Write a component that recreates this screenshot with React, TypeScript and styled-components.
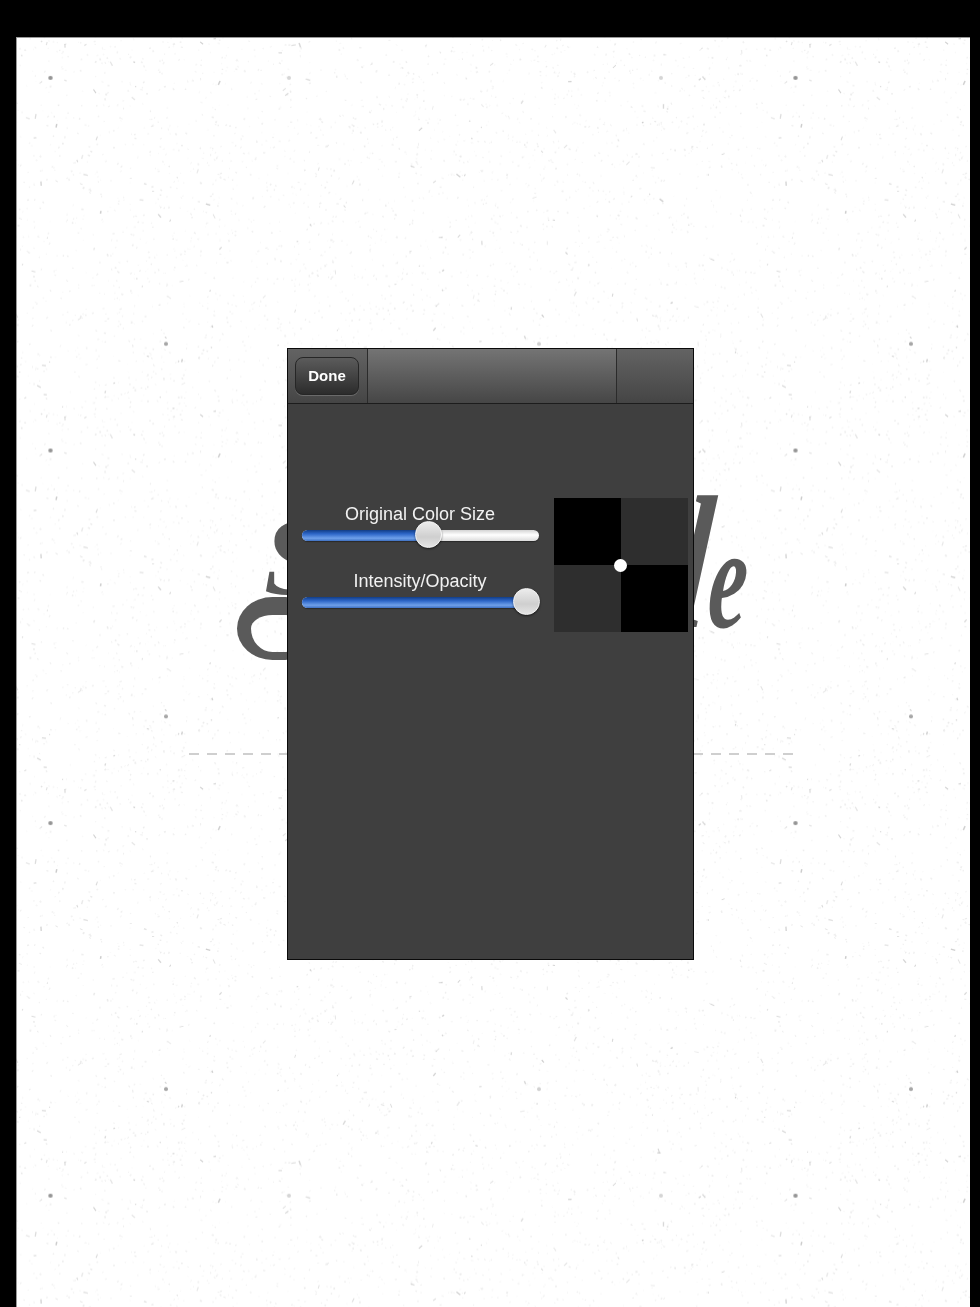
import React, { useMemo } from "react";
import styled, { createGlobalStyle } from "styled-components";

const Global = createGlobalStyle`
  html, body { margin: 0; padding: 0; background: #000; }
  body { height: 1307px; overflow: hidden; font-family: "Liberation Sans", Arial, sans-serif; }
`;

const Page = styled.div`
  height: 1307px;
  padding: 37px 10px 0 16px;
  box-sizing: border-box;
  background: #000;
`;

const Paper = styled.main`
  position: relative;
  height: 1270px;
  background: #fff;
  overflow: hidden;
  padding: 311px 0 0 271px;
  box-sizing: border-box;
  box-shadow: inset 1px 1px 0 #9a9a9a;
  filter: blur(0.35px);
`;

const Grain = styled.svg`
  position: absolute;
  inset: 0;
  width: 100%;
  height: 100%;
  filter: blur(0.6px);
`;

const LogoLetters = styled.span<{ $left: number; $top: number; $size: number; $sx: number; $skew: number }>`
  position: absolute;
  left: ${(p) => p.$left}px;
  top: ${(p) => p.$top}px;
  font-family: "Liberation Serif", serif;
  font-style: italic;
  font-weight: 700;
  font-size: ${(p) => p.$size}px;
  line-height: 0.7;
  color: #5a5a5a;
  transform-origin: 0 100%;
  transform: scaleX(${(p) => p.$sx}) skewX(${(p) => p.$skew}deg);
  white-space: nowrap;
`;

const LogoFlourish = styled.div`
  position: absolute;
  left: 221px;
  top: 560px;
  width: 72px;
  height: 63px;
  box-sizing: border-box;
  border-style: solid;
  border-color: #5a5a5a transparent #5a5a5a #5a5a5a;
  border-width: 18px 0 8px 14px;
  border-radius: 36px 24px 24px 36px / 32px;
`;

const Rule = styled.div`
  position: absolute;
  left: 173px;
  top: 716px;
  width: 606px;
  height: 2px;
  background: repeating-linear-gradient(90deg, #cfcfcf 0 10px, transparent 10px 18px);
`;

const Modal = styled.section`
  position: relative;
  width: 407px;
  height: 612px;
  box-sizing: border-box;
  border: 1px solid #0a0a0a;
  background: #3f3f3f;
  display: flex;
  flex-direction: column;
`;

const Toolbar = styled.header`
  height: 55px;
  flex: none;
  display: grid;
  grid-template-columns: 80px 1fr 77px;
  border-bottom: 1px solid #1c1c1c;
  box-sizing: border-box;
  background: linear-gradient(#747474, #464646);
`;

const ToolCell = styled.div<{ $divider?: "left" | "right"; $dim?: boolean }>`
  display: flex;
  align-items: center;
  padding-left: 7px;
  ${(p) => (p.$divider === "right" ? "border-right: 1px solid #2b2b2b;" : "")}
  ${(p) => (p.$divider === "left" ? "border-left: 1px solid #2b2b2b;" : "")}
  ${(p) => (p.$dim ? "background: linear-gradient(#636363, #454545);" : "")}
`;

const DoneButton = styled.button`
  width: 64px;
  height: 38px;
  margin-top: -1px;
  padding: 0;
  border: 1px solid #262626;
  border-radius: 8px;
  background: linear-gradient(#5b5b5b, #2c2c2c);
  box-shadow: 0 1px 0 #6a6a6a;
  color: #fff;
  font: 700 15px "Liberation Sans", Arial, sans-serif;
`;

const Body = styled.div`
  display: flex;
  align-items: flex-start;
  padding: 94px 5px 0 14px;
  gap: 14px;
`;

const Controls = styled.div`
  width: 238px;
  padding-top: 5px;
  display: flex;
  flex-direction: column;
  gap: 29px;
`;

const SliderGroup = styled.div`
  display: flex;
  flex-direction: column;
  align-items: center;
`;

const SliderLabel = styled.label`
  color: #f2f2f2;
  font-size: 18px;
  line-height: 22px;
  height: 22px;
  margin-left: -2px;
`;

const Track = styled.div`
  position: relative;
  width: 237px;
  height: 11px;
  margin: 5px 0 0 -1px;
  border-radius: 6px;
  background: linear-gradient(#d4d4d4, #ffffff 45%, #dcdcdc);
  box-shadow: 0 1px 1px rgba(0, 0, 0, 0.35);
`;

const Fill = styled.div`
  height: 100%;
  border-radius: 6px 0 0 6px;
  background: linear-gradient(#123d86, #2d66c8 35%, #6fa0ea 75%, #3e70c2);
`;

const Thumb = styled.div`
  position: absolute;
  top: -9px;
  width: 27px;
  height: 27px;
  margin-left: -13px;
  border-radius: 50%;
  background: linear-gradient(#ececec, #cfcfcf 60%, #e4e4e4);
  border: 1px solid #f4f4f4;
  box-sizing: border-box;
  box-shadow: 0 1px 2px rgba(0, 0, 0, 0.55);
`;

const Preview = styled.div`
  position: relative;
  display: grid;
  grid-template-columns: 67px 67px;
  grid-template-rows: 67px 67px;
  flex: none;
`;

const Swatch = styled.div<{ $dark?: boolean }>`
  background: ${(p) => (p.$dark ? "#000" : "#2e2e2e")};
`;

const Handle = styled.div`
  position: absolute;
  left: 60px;
  top: 61px;
  width: 13px;
  height: 13px;
  border-radius: 50%;
  background: #fff;
`;

function makeSpecks() {
  let s = 20240611;
  const r = () => {
    s = (s * 1664525 + 1013904223) >>> 0;
    return s / 4294967296;
  };
  const out: { x: number; y: number; w: number; h: number; a: number; o: number }[] = [];
  for (let i = 0; i < 3000; i++) {
    const big = r() < 0.06;
    out.push({
      x: r() * 745,
      y: r() * 372.6,
      w: big ? 1 + r() * 4 : 0.8 + r() * 1.6,
      h: big ? 0.8 + r() * 0.7 : 0.8 + r() * 1,
      a: r() * 180,
      o: big ? 0.1 + r() * 0.2 : 0.03 + r() * 0.08,
    });
  }
  return out;
}

const MARKS = [
  [51, 78, 0.45], [289, 78, 0.28], [661, 78, 0.28], [795, 78, 0.45],
  [166, 344, 0.35], [539, 344, 0.3], [911, 344, 0.35],
];

export default function App() {
  const specks = useMemo(makeSpecks, []);
  return (
    <>
      <Global />
      <Page>
        <Paper>
          <Grain aria-hidden="true">
            <defs>
              <pattern
                id="grain"
                width="745"
                height="372.6"
                patternUnits="userSpaceOnUse"
                patternTransform="translate(-16 -37)"
              >
                {specks.map((d, i) => (
                  <rect
                    key={i}
                    x={d.x}
                    y={d.y}
                    width={d.w}
                    height={d.h}
                    fill="#555"
                    opacity={d.o}
                    transform={`rotate(${d.a} ${d.x} ${d.y})`}
                  />
                ))}
                {MARKS.map(([x, y, o], i) => (
                  <circle key={i} cx={x % 745} cy={y % 372.6} r="2" fill="#666" opacity={o} />
                ))}
              </pattern>
            </defs>
            <rect width="100%" height="100%" fill="url(#grain)" />
          </Grain>
          <LogoLetters $left={248} $top={482} $size={110} $sx={1} $skew={0}>S</LogoLetters>
          <LogoFlourish />
          <LogoLetters $left={655} $top={460} $size={190} $sx={0.62} $skew={-10}>l</LogoLetters>
          <LogoLetters $left={690} $top={491} $size={145} $sx={0.6} $skew={-6}>e</LogoLetters>
          <Rule />
          <Modal>
            <Toolbar>
              <ToolCell $divider="right" $dim>
                <DoneButton>Done</DoneButton>
              </ToolCell>
              <ToolCell />
              <ToolCell $divider="left" $dim />
            </Toolbar>
            <Body>
              <Controls>
                <SliderGroup>
                  <SliderLabel>Original Color Size</SliderLabel>
                  <Track>
                    <Fill style={{ width: "53%" }} />
                    <Thumb style={{ left: "53%" }} />
                  </Track>
                </SliderGroup>
                <SliderGroup>
                  <SliderLabel>Intensity/Opacity</SliderLabel>
                  <Track>
                    <Fill style={{ width: "94.6%" }} />
                    <Thumb style={{ left: "94.6%" }} />
                  </Track>
                </SliderGroup>
              </Controls>
              <Preview>
                <Swatch $dark />
                <Swatch />
                <Swatch />
                <Swatch $dark />
                <Handle />
              </Preview>
            </Body>
          </Modal>
        </Paper>
      </Page>
    </>
  );
}
